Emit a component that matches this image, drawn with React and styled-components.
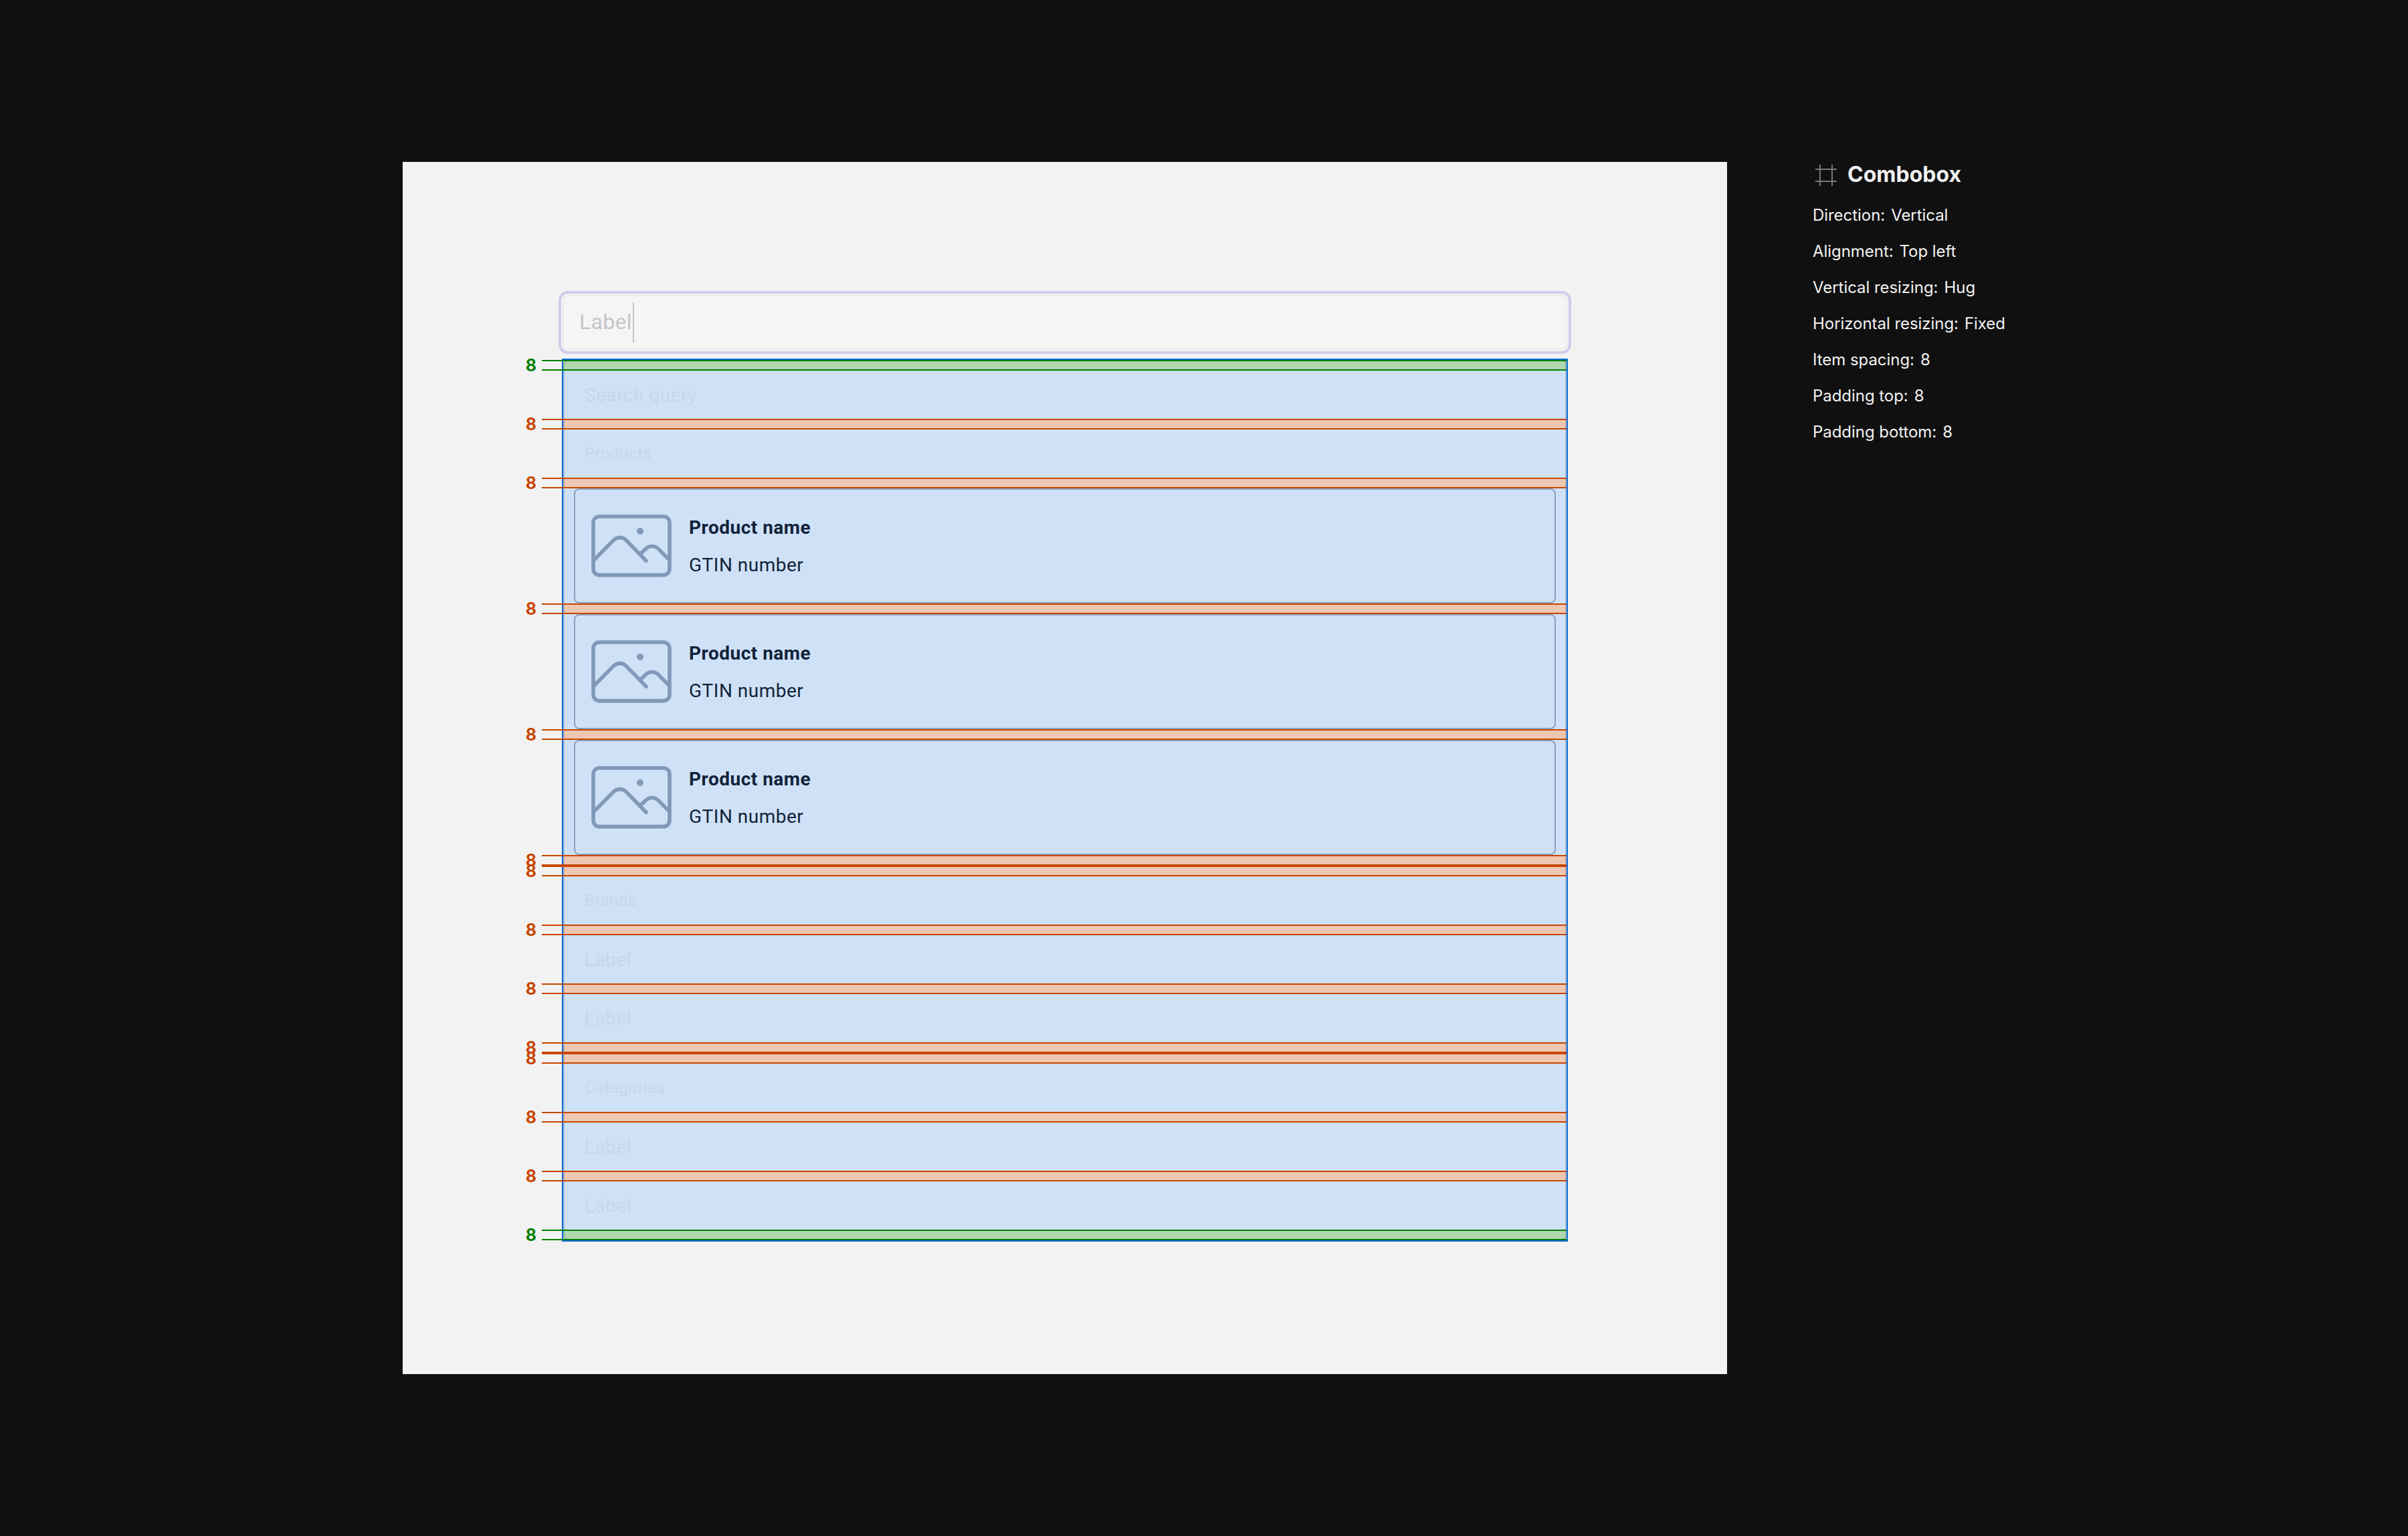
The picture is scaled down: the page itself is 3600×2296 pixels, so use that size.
import React from "react";
import styled, { createGlobalStyle } from "styled-components";

const GlobalStyle = createGlobalStyle`
  * {
    box-sizing: border-box;
  }

  body {
    margin: 0;
    background: #101010;
  }
`;

const colors = {
  padding: { line: "#008000", fill: "#b1d9b1" },
  gap: { line: "#c84600", fill: "#eec7b3" },
};

// Styled components
const Page = styled.main`
  display: flex;
  align-items: flex-start;
  gap: 128px;
  min-height: 2296px;
  padding: 242px 0 0 602px;
  font-family: Inter, sans-serif;
`;

const Board = styled.section`
  width: 1980px;
  height: 1812px;
  padding: 193px 233px 0;
  background: #f2f2f2;
`;

const FocusRing = styled.div`
  height: 94px;
  padding: 2px;
  border: 4px solid #d0cceb;
  border-radius: 14px;
  background: #f5f5f5;
`;

const Input = styled.div`
  display: flex;
  align-items: center;
  height: 82px;
  padding-left: 23px;
  border: 2px solid #ebebec;
  border-radius: 8px;
  color: #c5c5c9;
  font-family: Roboto, sans-serif;
  font-size: 32px;
  letter-spacing: 0.3px;
`;

const InputText = styled.span`
  padding-bottom: 2px;
`;

const Caret = styled.span`
  width: 2px;
  height: 60px;
  margin-left: 1px;
  background: #c5c5c9;
`;

const Menu = styled.div`
  position: relative;
  display: flex;
  flex-direction: column;
  margin: 7px 5px 0;
  border: 2px solid #0b6bdb;
  background: #cfe1f7;
  font-family: Roboto, sans-serif;

  &::after {
    content: "";
    position: absolute;
    inset: 0;
    border: 2px solid rgba(30, 60, 90, 0.21);
    border-radius: 8px;
  }
`;

const Option = styled.div`
  display: flex;
  align-items: center;
  height: 72px;
  padding-left: 32px;
  color: #c5d7ec;
  font-size: ${(props) => (props.$heading ? "24px" : "28px")};
  letter-spacing: 0.5px;
`;

const ProductCard = styled.div`
  display: flex;
  align-items: center;
  gap: 26px;
  height: 172px;
  margin: 0 16px;
  padding-left: 24px;
  border: 2px solid #8aa2c1;
  border-radius: 8px;
`;

const ProductText = styled.div`
  display: flex;
  flex-direction: column;
  gap: 16px;
  padding-top: 2px;
  color: #10233a;
  font-size: 28px;
  line-height: 40px;
  letter-spacing: 0.5px;
`;

const ProductName = styled.span`
  font-weight: 700;
`;

const Band = styled.div`
  position: relative;
  height: 16px;
  background: ${(props) => colors[props.$kind].fill};

  &::before {
    content: "";
    position: absolute;
    z-index: 1;
    inset: 0 0 0 -32px;
    border: solid ${(props) => colors[props.$kind].line};
    border-width: 2px 0;
  }
`;

const BandLabel = styled.span`
  position: absolute;
  right: calc(100% + 40px);
  top: -6px;
  color: ${(props) => colors[props.$kind].line};
  font-family: Inter, sans-serif;
  font-size: 25px;
  font-weight: 700;
  line-height: 28px;
`;

const Specs = styled.aside`
  display: flex;
  flex-direction: column;
  color: #f2f2f2;
`;

const SpecsHeader = styled.header`
  display: flex;
  align-items: center;
  gap: 16px;
  height: 40px;
  margin-bottom: 20px;
  padding-left: 4px;
`;

const SpecsTitle = styled.h1`
  margin: 0;
  padding-bottom: 2px;
  font-size: 32px;
  font-weight: 700;
  line-height: 36px;
`;

const SpecRow = styled.div`
  display: flex;
  gap: 9px;
  height: 54px;
  font-size: 24px;
  line-height: 40px;
  letter-spacing: -0.05px;
`;

const ImageIcon = () => (
  <svg width="120" height="94" viewBox="0 0 120 94" fill="none">
    <g stroke="#8099b8" strokeWidth="5.6" strokeLinecap="round">
      <rect x="3" y="3" width="114" height="87.6" rx="9" />
      <path d="M4 68L33.2 38.6A13.4 13.4 0 0 1 52.2 38.6L82 69.2" />
      <path d="M75 57.6L81.2 51.4A13.4 13.4 0 0 1 100.2 51.4L116 67.4" />
    </g>
    <circle cx="73" cy="25" r="5" fill="#8099b8" />
  </svg>
);

const FrameIcon = () => (
  <svg width="32" height="32" viewBox="0 0 32 32" stroke="#777777" strokeWidth="2">
    <path d="M7 0V32M25 0V32M0 7H32M0 25H32" />
  </svg>
);

const Spacing = ({ kind = "gap" }) => (
  <Band $kind={kind}>
    <BandLabel $kind={kind}>8</BandLabel>
  </Band>
);

const Product = () => (
  <ProductCard>
    <ImageIcon />
    <ProductText>
      <ProductName>Product name</ProductName>
      <span>GTIN number</span>
    </ProductText>
  </ProductCard>
);

const specs = [
  ["Direction:", "Vertical"],
  ["Alignment:", "Top left"],
  ["Vertical resizing:", "Hug"],
  ["Horizontal resizing:", "Fixed"],
  ["Item spacing:", "8"],
  ["Padding top:", "8"],
  ["Padding bottom:", "8"],
];

const App = () => {
  return (
    <Page>
      <GlobalStyle />
      <Board>
        <FocusRing>
          <Input>
            <InputText>Label</InputText>
            <Caret />
          </Input>
        </FocusRing>
        <Menu>
          <Spacing kind="padding" />
          <Option>Search query</Option>
          <Spacing />
          <Option $heading>Products</Option>
          <Spacing />
          <Product />
          <Spacing />
          <Product />
          <Spacing />
          <Product />
          {/* two gaps touch between groups */}
          <Spacing />
          <Spacing />
          <Option $heading>Brands</Option>
          <Spacing />
          <Option>Label</Option>
          <Spacing />
          <Option>Label</Option>
          <Spacing />
          <Spacing />
          <Option $heading>Categories</Option>
          <Spacing />
          <Option>Label</Option>
          <Spacing />
          <Option>Label</Option>
          <Spacing kind="padding" />
        </Menu>
      </Board>
      <Specs>
        <SpecsHeader>
          <FrameIcon />
          <SpecsTitle>Combobox</SpecsTitle>
        </SpecsHeader>
        {specs.map(([name, value]) => (
          <SpecRow key={name}>
            <span>{name}</span>
            <span>{value}</span>
          </SpecRow>
        ))}
      </Specs>
    </Page>
  );
};

export default App;
